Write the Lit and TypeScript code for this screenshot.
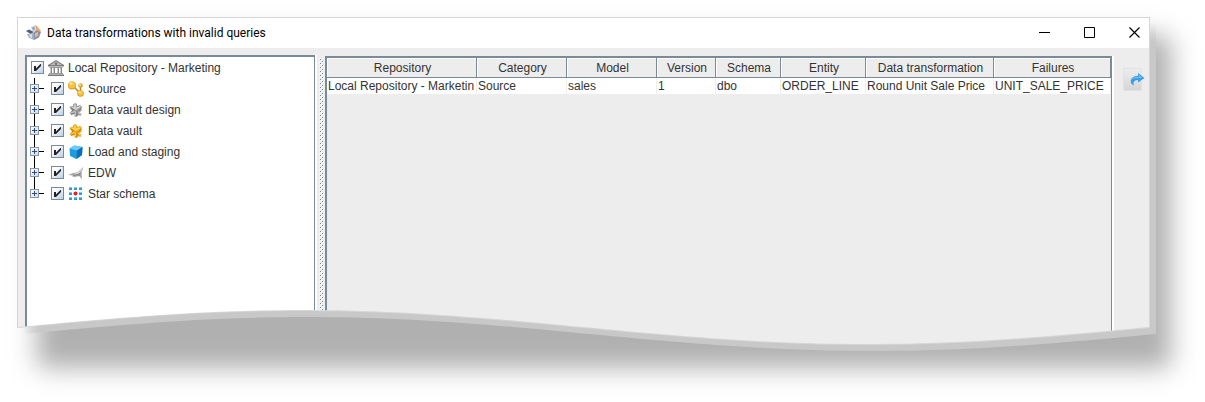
import { LitElement, html, css, svg, unsafeCSS } from "lit";
import { customElement, state } from "lit/decorators.js";

// Torn-paper bottom edge: one full sine period, measured from the bottom.
const wave = (lift: number) => {
  const steps = 96;
  const points = ["0 0", "100% 0"];
  for (let i = steps; i >= 0; i--) {
    const rise = lift + 17 * Math.sin((2 * Math.PI * i) / steps);
    points.push(`${((100 * i) / steps).toFixed(3)}% calc(100% - ${rise.toFixed(2)}px)`);
  }
  return unsafeCSS(`polygon(${points.join(",")})`);
};

const puzzle = (dark: string, base: string, light: string) => svg`
  <path d="M2 4.500 5 4V2.500L7 1l2 1v2l3-1 2 1.500-1 2.500 1 1-1.500 1.500L11 10l2.500 2-1 2L10 13l-1 2-2.500-.5V12L3 12.500 1.500 11 4 9 3 7 1.500 6Z" fill="${base}"/>
  <path d="M3 4.800 6 5V3l1.500-1L8 5.500 12 4l1 .8-3 2.200-2 1-3-1.500Z" fill="${light}"/>
  <path d="M3 11 6.500 9.500 8 10.500 7.500 13M10 10l2.500 2.500" stroke="${light}" fill="none"/>
  <path d="M3 6.500 5.500 7.500 3.500 9.500M9 9.500 9 14M13.500 6 10.500 8.500M3 12.300 6 11.500" stroke="${dark}" fill="none"/>`;

const icons: Record<string, unknown> = {
  app: svg`
    <path d="M0 6 3 4.500 8 7 4.500 9Z" fill="#4e5f7a"/>
    <path d="M1 9 4.500 9 8 7.500V15L3 13Z" fill="#a3b0c2"/>
    <path d="M3 9.500 6 9V13L4 12.500Z" fill="#d6dde6"/>
    <path d="M5 2 10 0 9 6 7 6.500Z" fill="#c3cad6"/>
    <path d="M6 3 8.500 2 8 5.500Z" fill="#8895ab"/>
    <path d="M10 0 15 6 13 8.500 9.500 5.500Z" fill="#eba567"/>
    <path d="M8 7 10 5.500 15 7 13 12.500 8 15Z" fill="#7d90b0"/>
    <path d="M9 8 12 7 12.500 10.500 9 12.500Z" fill="#efb283"/>`,
  bank: svg`
    <path d="M8 0 16 5v1.500H0V5Z" fill="#7c7c7c"/>
    <path d="M8 1.200 14 5H2Z" fill="#bdbdbd"/>
    <circle cx="8" cy="3.700" r="1.200" fill="#6d6d6d"/>
    <path d="M1.500 7h13v1h-13zM1 13h14v1H1z" fill="#999"/>
    <path d="M2 8h2v5H2zM5 8h2v5H5zM9 8h2v5H9zM12 8h2v5h-2z" fill="#8a8a8a"/>
    <path d="M2 8h1v5H2zM5 8h1v5H5zM9 8h1v5H9zM12 8h1v5h-1z" fill="#c9c9c9"/>
    <path d="M0 14h16v2H0z" fill="#777"/><path d="M0 14h16v1H0z" fill="#b0b0b0"/>`,
  source: svg`
    <path d="M5 5 12 12M12.500 13V5" stroke="#b98b1c" stroke-width="1.500" fill="none"/>
    <circle cx="4" cy="4.500" r="4" fill="#d9971a"/><circle cx="4" cy="4" r="3.500" fill="#f7c13a"/>
    <ellipse cx="3" cy="2.600" rx="1.800" ry="1.200" fill="#ffe9a0"/>
    <circle cx="12.500" cy="4.500" r="2.300" fill="#e0a32a"/><circle cx="12" cy="4" r="1.100" fill="#ffe08a"/>
    <circle cx="12.500" cy="12.500" r="3.300" fill="#d9971a"/><circle cx="12.500" cy="12.100" r="2.700" fill="#f7c440"/>
    <ellipse cx="11.700" cy="11.200" rx="1.200" ry=".8" fill="#ffeaa8"/>`,
  puzzleGrey: puzzle("#6f6f6f", "#9c9c9c", "#cfcfcf"),
  puzzleGold: puzzle("#c07a08", "#eda41a", "#ffd65a"),
  cube: svg`
    <path d="M1.500 4.500 6.500 1.500 14.500 3 14 11 8.500 15 2 12Z" fill="#1f9be0"/>
    <path d="M1.500 4.500 6.500 1.500 14.500 3 9 6.500Z" fill="#6cc9f5"/>
    <path d="M9 6.500 14.500 3 14 11 8.500 15Z" fill="#0b70b8"/>`,
  plane: svg`
    <path d="M0 10 5 8 9 7.500 15.500 2 13.500 7.500 14 14 11 11 7 12 4 11.500 5 10.500Z" fill="#a6a6a6"/>
    <path d="M9 7.500 15.500 2 12 8.500 10 9.500 5 9.500Z" fill="#d2d2d2"/>
    <path d="M5 10.500 10 9.500 13 7.500M11 11 12 9.500" stroke="#777" stroke-width=".8" fill="none"/>`,
  star: svg`
    <g fill="#2c9ad8">
      <rect x="1" y="1" width="3" height="3"/><rect x="6" y="1" width="3" height="3"/><rect x="11" y="1" width="3" height="3"/>
      <rect x="1" y="6" width="3" height="3"/><rect x="11" y="6" width="3" height="3"/>
      <rect x="1" y="11" width="3" height="3"/><rect x="6" y="11" width="3" height="3"/><rect x="11" y="11" width="3" height="3"/>
    </g>
    <path d="M1 1h3v1H1zM6 1h3v1H6zM11 1h3v1h-3zM1 6h3v1H1zM11 6h3v1h-3zM1 11h3v1H1zM6 11h3v1H6zM11 11h3v1h-3z" fill="#7cc9f0"/>
    <circle cx="7.500" cy="7.500" r="2" fill="#e3222b"/>`,
};

const icon = (name: string) =>
  html`<svg class="icon" viewBox="0 0 16 16" aria-hidden="true">${icons[name]}</svg>`;

const branches = [
  { label: "Source", icon: "source" },
  { label: "Data vault design", icon: "puzzleGrey" },
  { label: "Data vault", icon: "puzzleGold" },
  { label: "Load and staging", icon: "cube" },
  { label: "EDW", icon: "plane" },
  { label: "Star schema", icon: "star" },
];

const columns = [
  { title: "Repository", width: 150 },
  { title: "Category", width: 90 },
  { title: "Model", width: 90 },
  { title: "Version", width: 59 },
  { title: "Schema", width: 65 },
  { title: "Entity", width: 85 },
  { title: "Data transformation", width: 128 },
  { title: "Failures", width: 117 },
];
const total = columns.reduce((sum, c) => sum + c.width, 0);

@customElement("repository-tree")
export class RepositoryTree extends LitElement {
  static styles = css`
    :host { display: block; padding: 0 3px; }
    ul { list-style: none; margin: 0; padding: 0; }
    .row { display: flex; align-items: center; height: 21px; }
    .children { position: relative; }
    .children::before {
      content: ""; position: absolute; left: 4px; top: 0; bottom: 10px;
      width: 1px; background: #000;
    }
    label { display: flex; align-items: center; white-space: nowrap; }
    .root label { padding-left: 1px; }
    .name { padding-top: 2px; }
    .expander {
      position: relative; box-sizing: border-box; width: 9px; height: 9px; margin: 0;
      padding: 0; border: 1px solid #8a96a4; color: #2b4c8c;
      background:
        linear-gradient(currentColor, currentColor) center / 5px 1px no-repeat,
        linear-gradient(currentColor, currentColor) center / 1px 5px no-repeat,
        linear-gradient(135deg, #fff, #cfdcea);
    }
    .stub { width: 5px; height: 1px; margin-right: 7px; background: #000; }
    input {
      appearance: none; box-sizing: border-box; width: 13px; height: 13px; margin: 0;
      border: 1px solid #7a8a99; background: linear-gradient(135deg, #fff 25%, #b8cfe5);
    }
    input:checked {
      background:
        url("data:image/svg+xml,%3Csvg xmlns='http://www.w3.org/2000/svg' viewBox='0 0 11 11'%3E%3Cpath d='M2 4h2v2.500L8.500 2H9v2L4 9H2z' fill='%23222'/%3E%3C/svg%3E") center / 11px 11px no-repeat,
        linear-gradient(135deg, #fff 25%, #b8cfe5);
    }
    .icon { width: 16px; height: 16px; margin: 0 4px; flex: none; }
  `;

  render() {
    return html`
      <ul role="tree" aria-label="Repositories">
        <li role="treeitem" aria-expanded="true">
          <div class="row root">
            <label><input type="checkbox" checked />${icon("bank")}<span class="name">Local Repository - Marketing</span></label>
          </div>
          <ul class="children" role="group">
            ${branches.map(
              (b) => html`<li class="row" role="treeitem" aria-expanded="false">
                <button class="expander" aria-label="Expand ${b.label}"></button>
                <span class="stub"></span>
                <label><input type="checkbox" checked />${icon(b.icon)}<span class="name">${b.label}</span></label>
              </li>`
            )}
          </ul>
        </li>
      </ul>`;
  }
}

@customElement("failure-table")
export class FailureTable extends LitElement {
  static styles = css`
    :host { display: block; }
    table { width: 100%; table-layout: fixed; border-collapse: separate; border-spacing: 0; }
    th, td {
      box-sizing: border-box; padding: 0; font-weight: normal; white-space: nowrap;
      overflow: hidden;
    }
    th {
      height: 20px; padding: 2px 0 0 2px; line-height: 17px; text-align: center;
      border: solid #7a8a99; border-width: 0 1px 1px 0;
      box-shadow: inset 1px 1px #fff;
    }
    td {
      height: 16px; line-height: 15px; padding-left: 1px; background: #fff;
      border-right: 1px solid #eee;
    }
  `;

  @state() rows = [
    ["Local Repository - Marketin", "Source", "sales", "1", "dbo", "ORDER_LINE", "Round Unit Sale Price", "UNIT_SALE_PRICE"],
  ];

  render() {
    return html`
      <table>
        <colgroup>
          ${columns.map((c) => html`<col style="width:${(100 * c.width) / total}%" />`)}
        </colgroup>
        <thead><tr>${columns.map((c) => html`<th scope="col">${c.title}</th>`)}</tr></thead>
        <tbody>
          ${this.rows.map((r) => html`<tr>${r.map((v) => html`<td>${v}</td>`)}</tr>`)}
        </tbody>
      </table>`;
  }
}

@customElement("app-root")
export class AppRoot extends LitElement {
  static styles = css`
    :host {
      display: flex; box-sizing: border-box; min-height: 100vh; padding: 17px 55px 56px 17px;
      overflow: hidden; background: #fff; color: #333;
      font: 12px/15px "Liberation Sans", Arial, sans-serif;
    }
    .frame { position: relative; z-index: 0; display: flex; flex: 1; min-width: 0; }
    .frame::before {
      content: ""; position: absolute; z-index: -2; inset: 20px -20px -21px 21px;
      background: #b0b0b0; filter: blur(12px);
      box-shadow: 0 0 24px rgba(0, 0, 0, 0.1);
    }
    .frame::after {
      content: ""; position: absolute; z-index: -1; inset: 6px -6px -6px 6px;
      background: #c8c8c8; clip-path: ${wave(18)};
      mask-image: linear-gradient(transparent, #000 30px), linear-gradient(90deg, transparent, #000 20px);
      mask-composite: intersect;
    }
    .window {
      display: flex; flex: 1; min-width: 0; padding: 1px 1px 0; background: #d6d6d6;
      clip-path: ${wave(18)};
    }
    .surface {
      display: flex; flex-direction: column; flex: 1; min-width: 0; background: #ededed;
      clip-path: ${wave(19)};
    }
    .titlebar {
      display: flex; align-items: center; height: 30px; padding-left: 8px;
      background: #fff; color: #000;
    }
    h1 {
      flex: 1; margin: 0 0 0 5px;
      font: 12px/16px Roboto, "Noto Sans", sans-serif;
    }
    .icon { width: 16px; height: 16px; }
    .control {
      display: grid; place-items: center; box-sizing: border-box; width: 45px; height: 30px;
      padding: 0 0 2px; border: 0; background: none; color: #000;
    }
    .control:last-child { width: 37px; padding-left: 8px; }
    .control svg { width: 11px; height: 11px; fill: none; stroke: currentColor; }
    .body { display: flex; flex: 1; padding: 7px 5px 0 7px; }
    .tree {
      flex: 0 0 290px; box-sizing: border-box; border: solid #7a8a99;
      border-width: 2px 1px 0 2px; background: #fff;
    }
    .splitter {
      flex: 0 0 10px; box-sizing: border-box; padding: 3px 0 0 4px;
      background: linear-gradient(90deg, #fff 2px, #ededed 2px);
    }
    .splitter::before {
      content: ""; display: block; width: 5px; height: 100%;
      background: url("data:image/svg+xml,%3Csvg xmlns='http://www.w3.org/2000/svg' width='4' height='4' shape-rendering='crispEdges'%3E%3Cpath d='M0 0h1v1H0zM2 2h1v1H2z' fill='%23fff'/%3E%3Cpath d='M1 1h1v1H1zM3 3h1v1H3z' fill='%237a8a99'/%3E%3C/svg%3E");
    }
    .results {
      flex: 1; min-width: 0; margin-top: 1px; border: solid #7a8a99;
      border-width: 2px 1px 0 2px; box-shadow: 2px 0 #fff;
    }
    .tools { flex: 0 0 32px; padding: 13px 0 0 11px; box-sizing: border-box; }
    .jump {
      box-sizing: border-box; width: 19px; height: 23px; padding: 0; border: 1px solid #e2e2e2;
      background: linear-gradient(#ececec, #d6d6d6); overflow: visible;
    }
    .jump svg { display: block; width: 16px; height: 16px; margin: 0 0 2px 5px; }
  `;

  render() {
    return html`
      <div class="frame">
        <main class="window">
          <div class="surface">
            <header class="titlebar">
              ${icon("app")}
              <h1>Data transformations with invalid queries</h1>
              <button class="control" aria-label="Minimize">
                <svg viewBox="0 0 11 11"><path d="M0 5.500h11" /></svg>
              </button>
              <button class="control" aria-label="Maximize">
                <svg viewBox="0 0 11 11"><path d="M.5.5h10v10H.5z" /></svg>
              </button>
              <button class="control" aria-label="Close">
                <svg viewBox="0 0 11 11"><path d="m.5.5 10 10m0-10-10 10" stroke-width="1.200" /></svg>
              </button>
            </header>
            <div class="body">
              <repository-tree class="tree"></repository-tree>
              <div class="splitter" role="separator" aria-orientation="vertical"></div>
              <failure-table class="results"></failure-table>
              <div class="tools">
                <button class="jump" aria-label="Go to object">
                  <svg viewBox="0 0 16 16" aria-hidden="true">
                    <path d="M5 14.500C-.5 12.500 1 4.500 9 5V2l6.500 5L9 11.500V9C5.500 8.800 3.500 11 5 14.500Z" fill="#3b9ee2" />
                    <path d="M2 9.500C3 6.500 6 5.500 10 6V4l3.500 3H9C5.500 6.800 3.500 7.500 2 9.500Z" fill="#6fc3f2" />
                  </svg>
                </button>
              </div>
            </div>
          </div>
        </main>
      </div>`;
  }
}
